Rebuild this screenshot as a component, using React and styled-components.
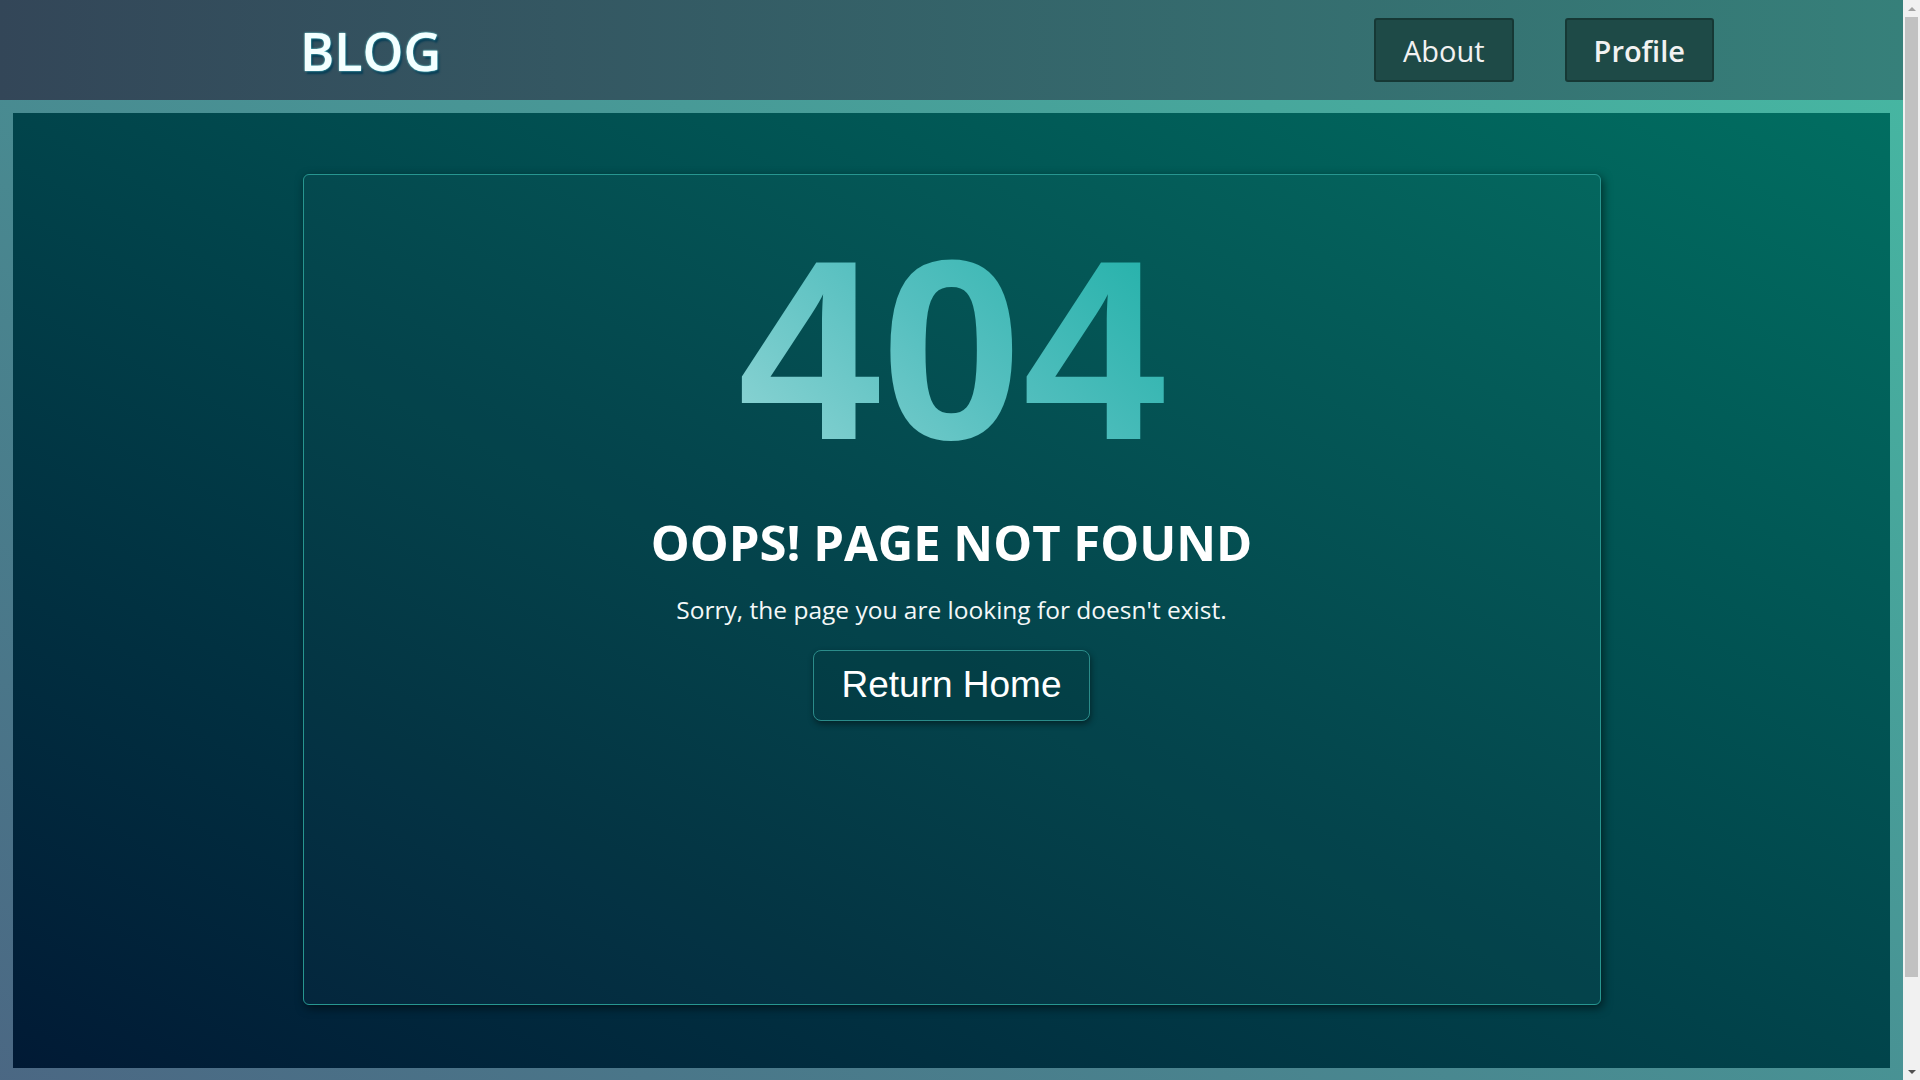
import styled, { createGlobalStyle } from "styled-components";

const GlobalStyle = createGlobalStyle`
  * {
    box-sizing: border-box;
  }
  body {
    margin: 0;
    font-family: "Open Sans", "Noto Sans", sans-serif;
  }
`;

const Page = styled.div`
  margin-right: 17px;
  min-height: 1177px;
  padding-bottom: 109px;
  background: linear-gradient(to top right, #4b6482, #46b9a3);
`;

const Header = styled.header`
  height: 100px;
  display: flex;
  align-items: center;
  justify-content: space-between;
  padding: 0 189px 0 300px;
  background: linear-gradient(to right, #334658, #36807a);
`;

const Logo = styled.h1`
  margin: 0;
  font-size: 52px;
  font-weight: 600;
  color: #f4ffff;
  text-shadow: 0 0 2px #8ff, 2px 3px 2px #073e56;
`;

const Nav = styled.nav`
  display: flex;
  gap: 51px;
`;

const NavButton = styled.button`
  height: 64px;
  padding: 0 27px;
  background: #1e4a47;
  border: 2px solid #163835;
  border-radius: 3px;
  color: #f2f2f2;
  font-family: "Open Sans", "Noto Sans", sans-serif;
  font-size: 29px;
  font-weight: ${(p) => (p.$active ? 600 : 400)};
  cursor: pointer;
`;

const Main = styled.main`
  margin: 13px 13px 0;
  height: 955px;
  padding: 61px 0 63px;
  background: linear-gradient(to top right, #011a35, #016e61);
`;

const Card = styled.section`
  width: 1298px;
  height: 100%;
  margin: 0 auto;
  padding-top: 47px;
  display: flex;
  flex-direction: column;
  align-items: center;
  background: rgba(255, 255, 255, 0.015);
  border: 1px solid #279690;
  border-radius: 6px;
  box-shadow: 2px 3px 10px rgba(0, 0, 0, 0.55);
`;

const Code = styled.div`
  display: inline-block;
  font-family: "Liberation Sans", Arial, sans-serif;
  font-size: 256px;
  font-weight: 700;
  line-height: 1;
  background: linear-gradient(45deg, #93d6d6 0%, #55bfbf 50%, #1fb0a8 100%);
  -webkit-background-clip: text;
  background-clip: text;
  color: transparent;
`;

const Title = styled.h2`
  margin: 35px 0 0;
  font-size: 49px;
  font-weight: 700;
  line-height: 1.2;
  color: #ffffff;
`;

const Message = styled.p`
  margin: 20px 0 0;
  font-size: 24.5px;
  line-height: 36px;
  color: #f4f8f8;
`;

const HomeButton = styled.button`
  margin-top: 22px;
  height: 71px;
  padding: 0 27px;
  background: rgba(0, 40, 45, 0.12);
  border: 1px solid #2b8c8a;
  border-radius: 8px;
  box-shadow: 1px 3px 6px rgba(0, 0, 0, 0.45);
  color: #ffffff;
  font-family: "Liberation Sans", Arial, sans-serif;
  font-size: 37px;
  cursor: pointer;
`;

/* browser scrollbar seen at the right edge of the screenshot */
const ScrollRail = styled.div`
  position: fixed;
  top: 0;
  right: 0;
  width: 17px;
  height: 100vh;
  display: flex;
  flex-direction: column;
  background: #f1f1f1;
`;

const ScrollArrow = styled.div`
  height: 17px;
  display: flex;
  align-items: center;
  justify-content: center;

  &::before {
    content: "";
    border-left: 4px solid transparent;
    border-right: 4px solid transparent;
    ${(p) =>
      p.$down
        ? "border-top: 4px solid #505050;"
        : "border-bottom: 4px solid #a3a3a3;"}
  }
`;

const ScrollTrack = styled.div`
  flex: 1;
  padding: 0 2px;
`;

const ScrollThumb = styled.div`
  height: 960px;
  background: #c1c1c1;
`;

export default function App() {
  return (
    <>
      <GlobalStyle />
      <Page>
        <Header>
          <Logo>BLOG</Logo>
          <Nav>
            <NavButton>About</NavButton>
            <NavButton $active>Profile</NavButton>
          </Nav>
        </Header>
        <Main>
          <Card>
            <Code>404</Code>
            <Title>OOPS! PAGE NOT FOUND</Title>
            <Message>Sorry, the page you are looking for doesn't exist.</Message>
            <HomeButton>Return Home</HomeButton>
          </Card>
        </Main>
      </Page>
      <ScrollRail>
        <ScrollArrow />
        <ScrollTrack>
          <ScrollThumb />
        </ScrollTrack>
        <ScrollArrow $down />
      </ScrollRail>
    </>
  );
}
